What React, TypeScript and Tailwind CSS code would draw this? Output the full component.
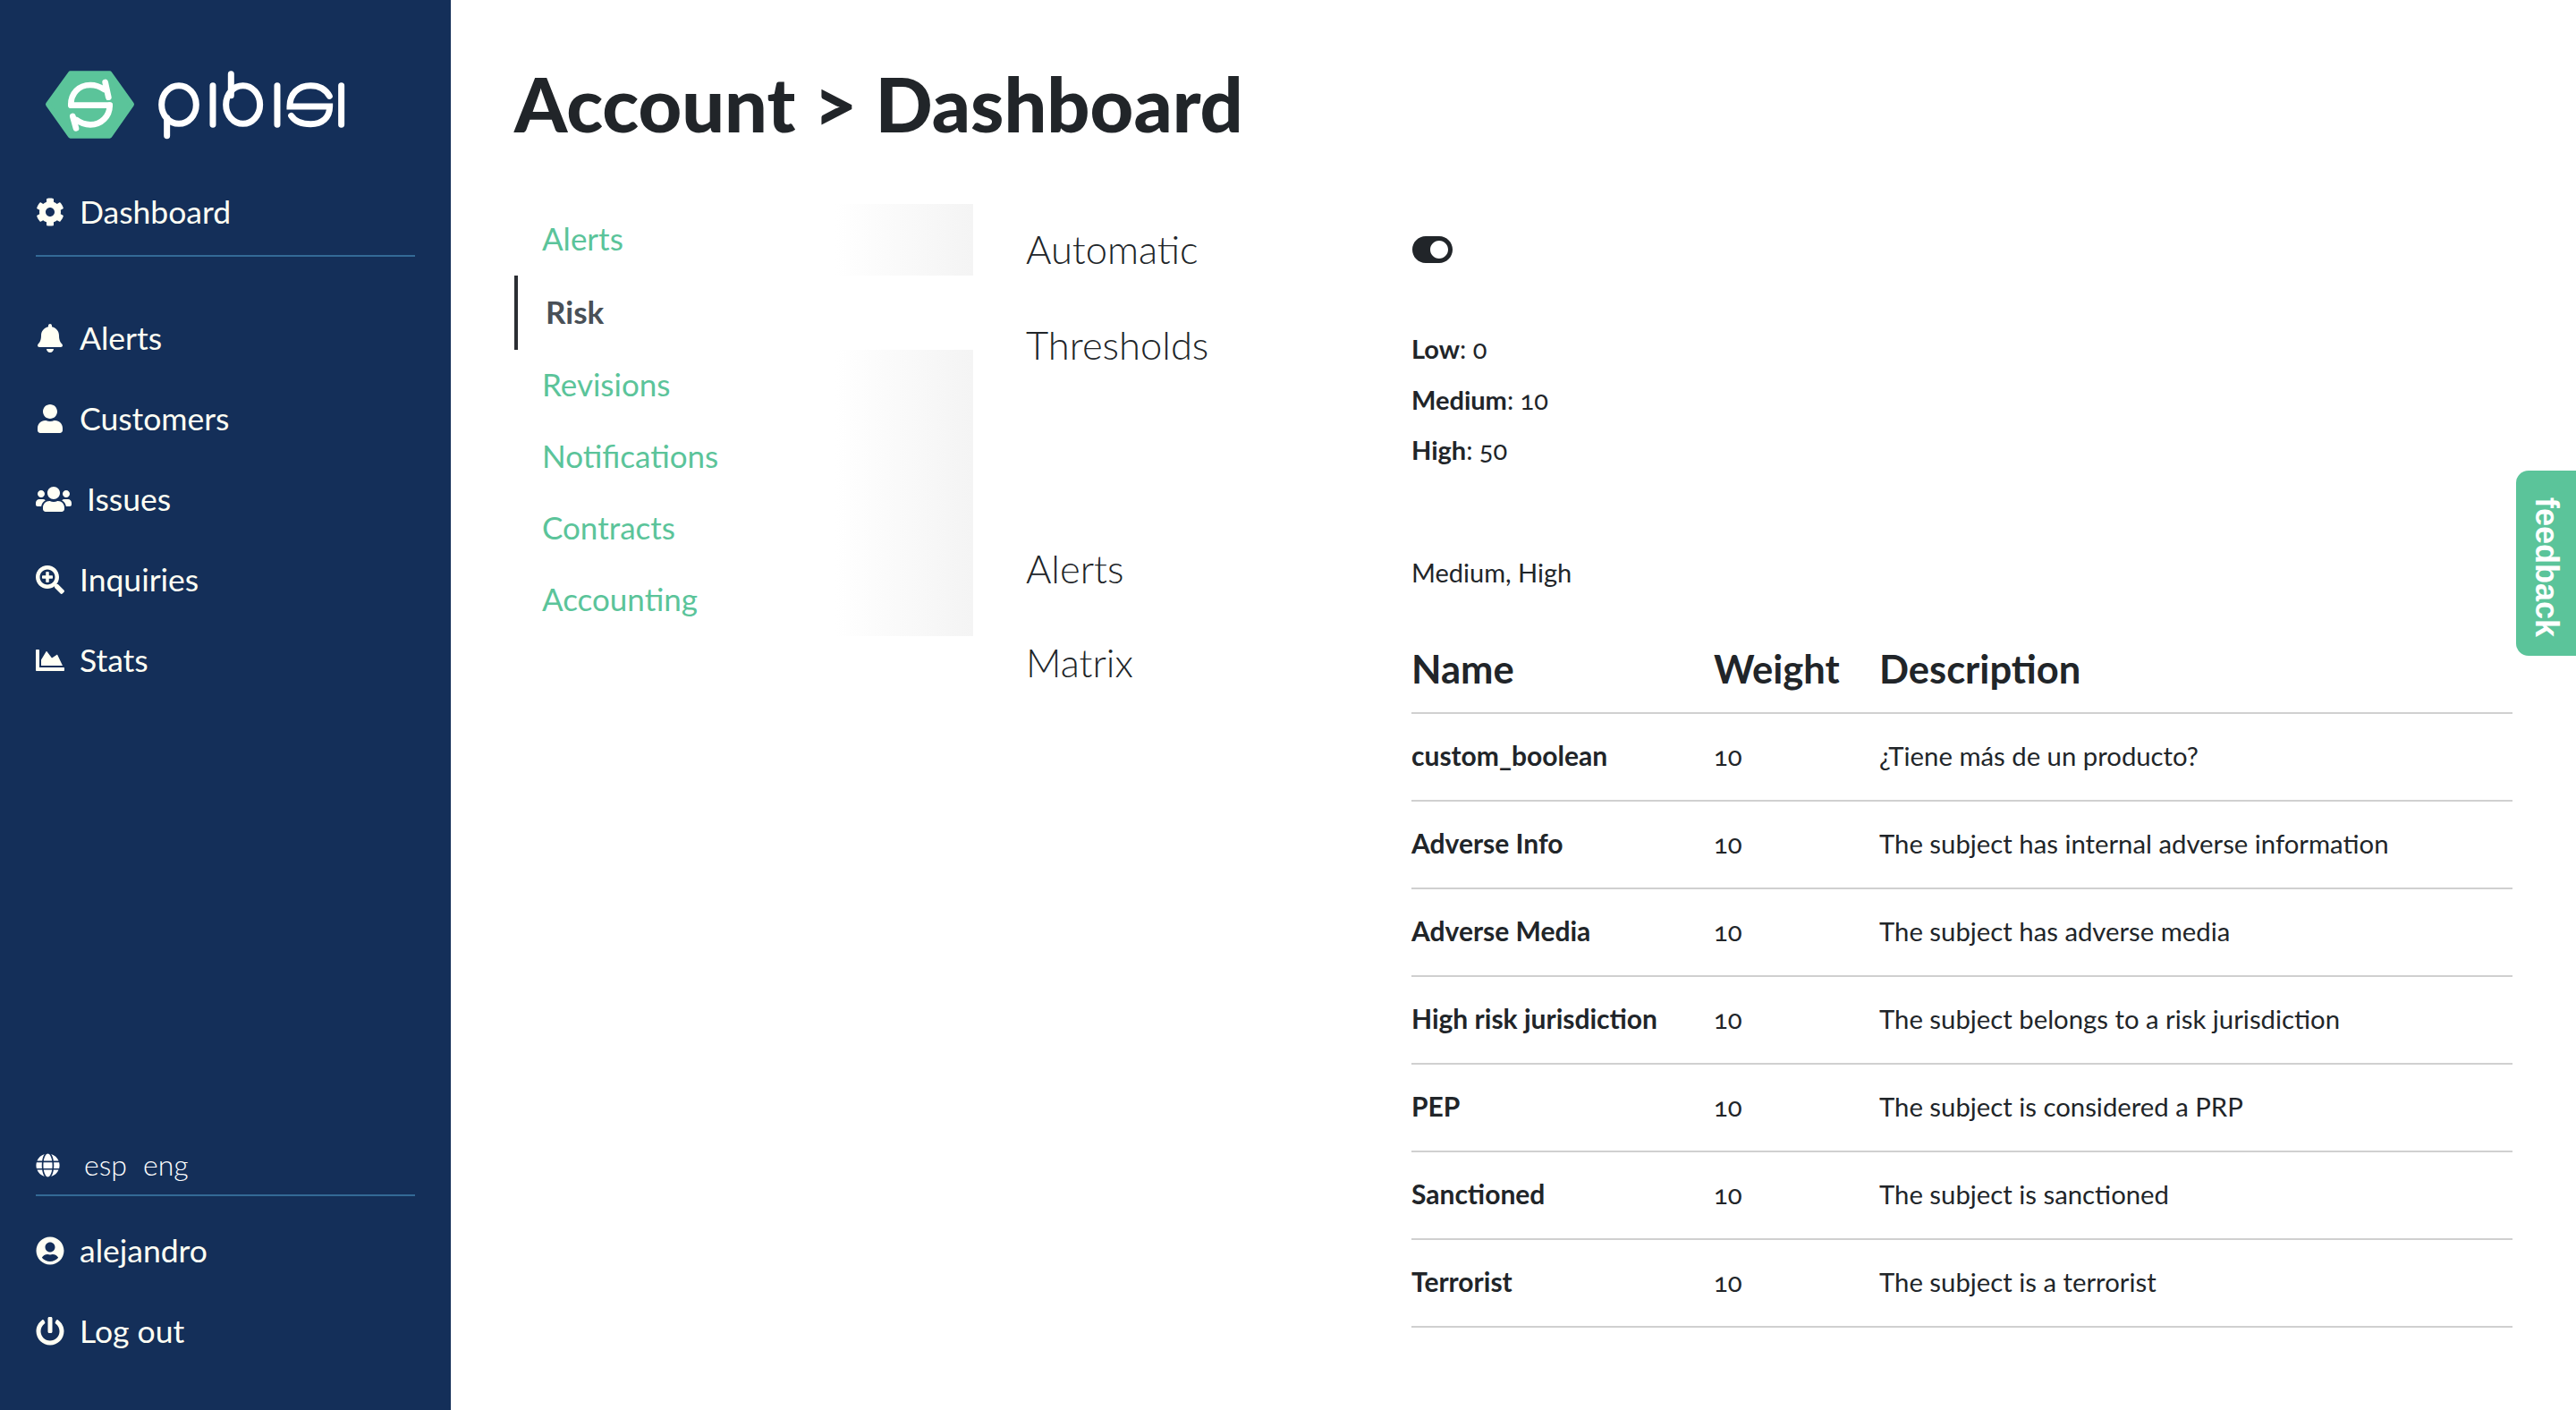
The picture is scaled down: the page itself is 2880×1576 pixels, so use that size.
import { FaBell, FaChartArea, FaCog, FaGlobe, FaPowerOff, FaSearchPlus, FaToggleOn, FaUser, FaUserCircle, FaUsers } from "react-icons/fa";
import type { IconType } from "react-icons";

const mainNav: { label: string; icon: IconType; iconClass: string }[] = [
  { label: "Alerts", icon: FaBell, iconClass: "size-8" },
  { label: "Customers", icon: FaUser, iconClass: "size-8" },
  { label: "Issues", icon: FaUsers, iconClass: "h-8 w-10" },
  { label: "Inquiries", icon: FaSearchPlus, iconClass: "size-8" },
  { label: "Stats", icon: FaChartArea, iconClass: "size-8" },
];

const subNav = ["Alerts", "Risk", "Revisions", "Notifications", "Contracts", "Accounting"];

const matrix = [
  { name: "custom_boolean", description: "¿Tiene más de un producto?" },
  { name: "Adverse Info", description: "The subject has internal adverse information" },
  { name: "Adverse Media", description: "The subject has adverse media" },
  { name: "High risk jurisdiction", description: "The subject belongs to a risk jurisdiction" },
  { name: "PEP", description: "The subject is considered a PRP" },
  { name: "Sanctioned", description: "The subject is sanctioned" },
  { name: "Terrorist", description: "The subject is a terrorist" },
];

function Logo() {
  return (
    <svg viewBox="0 0 420 130" className="h-[130px] w-[420px]" role="img" aria-label="pibisi">
      <g transform="scale(0.3333)">
        <path d="M161 200 L236 96 H368 L442 200 L368 306 H236 Z" fill="#5bc49a" stroke="#5bc49a" strokeWidth="16" strokeLinejoin="round" />
        <g fill="none" stroke="#fff" strokeWidth="20" strokeLinecap="round" strokeLinejoin="round">
          <path d="M350 150 C335 140 320 135 303 135 C262 135 238 165 238 200" />
          <path d="M238 203 H368" />
          <path d="M368 203 C368 240 340 268 303 268 C285 268 270 263 256 252" />
          <path d="M353 126 L364 176 M255 280 L244 240" />
        </g>
        <g fill="none" stroke="#fff" strokeWidth="21" strokeLinecap="round">
          <ellipse cx="600" cy="201" rx="58" ry="64" />
          <path d="M560 245 V305 M714 137 V268" />
          <ellipse cx="815" cy="201" rx="57" ry="64" />
          <path d="M775 98 V170 M930 137 V268 M1145 137 V268" />
          <path d="M1105 172 C1090 145 1065 137 1042 137 C1000 137 972 165 972 207 H1106 C1106 245 1080 266 1042 266 C1015 266 990 258 977 238" />
        </g>
      </g>
    </svg>
  );
}

function SideLink({ label, icon: Icon, iconClass }: { label: string; icon: IconType; iconClass: string }) {
  return (
    <a className="flex h-[90px] items-center gap-[17px] text-[35.5px] text-[#fffff4]">
      <Icon className={iconClass} />
      {label}
    </a>
  );
}

function Sidebar() {
  return (
    <aside className="flex h-full w-[504px] shrink-0 flex-col bg-[#142f59] pl-10 pr-10">
      <div className="mt-[50px] -ml-10">
        <Logo />
      </div>
      <div className="mt-3">
        <SideLink label="Dashboard" icon={FaCog} iconClass="size-8" />
      </div>
      <div className="mt-[3px] h-[2px] bg-[#336a96]" />
      <nav className="mt-[46px]">
        {mainNav.map((item) => (
          <SideLink key={item.label} {...item} />
        ))}
      </nav>
      <div className="mt-auto flex h-[50px] items-center pb-[3px] text-[32px] font-light text-white">
        <FaGlobe className="size-[27px] translate-y-[1px]" />
        <span className="ml-[27px]">esp</span>
        <span className="ml-[18px]">eng</span>
      </div>
      <div className="mt-[7px] h-[2px] bg-[#336a96]" />
      <div className="mt-4 mb-[43px]">
        <SideLink label="alejandro" icon={FaUserCircle} iconClass="size-8" />
        <SideLink label="Log out" icon={FaPowerOff} iconClass="size-8" />
      </div>
    </aside>
  );
}

function SubNav() {
  return (
    <ul className="w-[513px] shrink-0 text-[35px] text-[#5bc49a]">
      {subNav.map((item) =>
        item === "Risk" ? (
          <li key={item} className="flex h-[83px] items-center border-l-4 border-[#2b2e33] bg-white pb-[3px] pl-[31px] font-bold text-[#495057]">
            {item}
          </li>
        ) : (
          <li key={item} className="flex h-20 items-center bg-gradient-to-r from-white from-70% to-[#f4f4f4] pb-[3px] pl-[31px]">
            {item}
          </li>
        )
      )}
    </ul>
  );
}

function Label({ children }: { children: string }) {
  return <div className="-mt-[2px] w-[431px] shrink-0 text-[43.5px] leading-[58px] font-light">{children}</div>;
}

function MatrixTable() {
  return (
    <table className="w-[1231px] table-fixed border-collapse text-[29.3px]">
      <thead>
        <tr className="h-[84px] border-b-2 border-[#d0d0d0] text-left text-[43.5px] font-bold">
          <th className="w-[338px] pb-[14px]">Name</th>
          <th className="w-[185px] pb-[14px]">Weight</th>
          <th className="pb-[14px]">Description</th>
        </tr>
      </thead>
      <tbody>
        {matrix.map((row) => (
          <tr key={row.name} className="h-[98px] border-b-2 border-[#d0d0d0]">
            <td className="pb-[3px] text-[30px] font-bold">{row.name}</td>
            <td className="pb-[3px] oldstyle-nums">10</td>
            <td className="pb-[3px]">{row.description}</td>
          </tr>
        ))}
      </tbody>
    </table>
  );
}

export default function App() {
  return (
    <div className="relative flex h-[1576px] w-[2880px] overflow-hidden bg-white [font-family:Lato,sans-serif] text-[#212529]">
      <Sidebar />
      <main className="flex-1 pl-[71px]">
        <h1 className="pt-[66px] pb-[62px] text-[84.5px] leading-[100px] font-black">Account &gt; Dashboard</h1>
        <div className="flex">
          <SubNav />
          <div className="pt-[23px] pl-[59px]">
            <div className="flex h-[107px]">
              <Label>Automatic</Label>
              <FaToggleOn className="h-10 w-[47px] shrink-0 translate-y-2" />
            </div>
            <div className="flex h-[250px]">
              <Label>Thresholds</Label>
              <div className="pt-[4px] text-[29px] leading-[56.5px] oldstyle-nums">
                <p><b className="font-bold">Low</b>: 0</p>
                <p><b className="font-bold">Medium</b>: 10</p>
                <p><b className="font-bold">High</b>: 50</p>
              </div>
            </div>
            <div className="flex h-[105px]">
              <Label>Alerts</Label>
              <p className="pt-[4px] text-[29px] leading-[56px]">Medium, High</p>
            </div>
            <div className="flex">
              <Label>Matrix</Label>
              <MatrixTable />
            </div>
          </div>
        </div>
      </main>
      <div className="absolute top-[526px] right-0 flex h-[207px] w-[67px] items-center justify-center rounded-l-[14px] bg-[#5bc49a] pt-[10px] [font-family:'Liberation_Sans',sans-serif] text-[36px] font-bold text-white [writing-mode:vertical-rl]">
        feedback
      </div>
    </div>
  );
}
